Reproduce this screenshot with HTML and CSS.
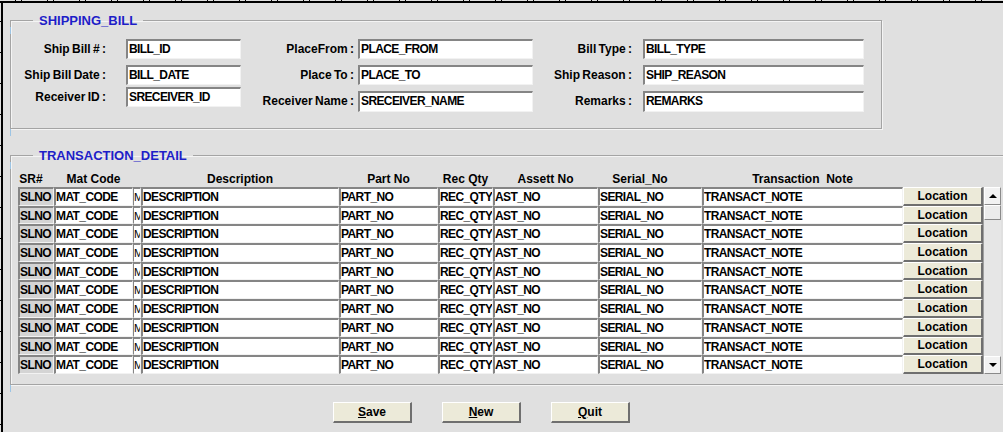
FILE: index.html
```html
<!DOCTYPE html>
<html lang="en">
<head>
    <meta charset="UTF-8">
    <meta name="viewport" content="width=device-width, initial-scale=1.0">
    <title>Shipping Bill</title>
    <link rel="stylesheet" href="styles.css">
</head>
<body>
    <div class="ruler-top"></div>
    <div class="screen">
        <div class="ruler-left"></div>
        <div class="canvas">
            <fieldset class="frame frame-bill">
                <legend>SHIPPING_BILL</legend>
                <div class="bill-grid">
                    <div class="col col-1">
                        <div class="item"><label>Ship Bill # :</label><span class="field">BILL_ID</span></div>
                        <div class="item"><label>Ship Bill Date :</label><span class="field">BILL_DATE</span></div>
                        <div class="item"><label>Receiver ID :</label><span class="field">SRECEIVER_ID</span></div>
                    </div>
                    <div class="col col-2">
                        <div class="item"><label>PlaceFrom :</label><span class="field">PLACE_FROM</span></div>
                        <div class="item"><label>Place To :</label><span class="field">PLACE_TO</span></div>
                        <div class="item"><label>Receiver Name :</label><span class="field">SRECEIVER_NAME</span></div>
                    </div>
                    <div class="col col-3">
                        <div class="item"><label>Bill Type :</label><span class="field">BILL_TYPE</span></div>
                        <div class="item"><label>Ship Reason :</label><span class="field">SHIP_REASON</span></div>
                        <div class="item"><label>Remarks :</label><span class="field">REMARKS</span></div>
                    </div>
                </div>
            </fieldset>

            <fieldset class="frame frame-detail">
                <legend>TRANSACTION_DETAIL</legend>
                <div class="detail">
                    <div class="detail-head">
                        <span class="head-sr">SR#</span>
                        <span>Mat Code</span>
                        <span></span>
                        <span>Description</span>
                        <span>Part No</span>
                        <span>Rec Qty</span>
                        <span>Assett No</span>
                        <span class="head-serial">Serial_No</span>
                        <span>Transaction&nbsp; Note</span>
                    </div>
                    <div class="detail-body">
                        <div class="detail-rows" id="detailRows">
                            <div class="detail-row">
                                <span class="field readonly">SLNO</span>
                                <span class="field">MAT_CODE</span>
                                <span class="field stub">M</span>
                                <span class="field">DESCRIPTION</span>
                                <span class="field">PART_NO</span>
                                <span class="field">REC_QTY</span>
                                <span class="field">AST_NO</span>
                                <span class="field">SERIAL_NO</span>
                                <span class="field">TRANSACT_NOTE</span>
                                <button class="btn">Location</button>
                            </div>
                        </div>
                        <div class="scrollbar">
                            <div class="scroll-btn"><i class="arrow-up"></i></div>
                            <div class="scroll-thumb"></div>
                            <div class="scroll-track"></div>
                            <div class="scroll-btn"><i class="arrow-down"></i></div>
                        </div>
                    </div>
                </div>
            </fieldset>

            <div class="actions">
                <button class="btn btn-action"><u>S</u>ave</button>
                <button class="btn btn-action"><u>N</u>ew</button>
                <button class="btn btn-action"><u>Q</u>uit</button>
            </div>
        </div>
    </div>
    <script>
        // the block shows 10 records, copy the template row
        const rows = document.getElementById('detailRows');
        const template = rows.querySelector('.detail-row');
        for (let i = 1; i < 10; i++) {
            rows.appendChild(template.cloneNode(true));
        }
    </script>
</body>
</html>
```

FILE: styles.css
```css
body {
    margin: 0;
    width: 1003px;
    height: 432px;
    overflow: hidden;
    background-color: #e0e0e0;
    color: #000;
    font-family: 'Liberation Sans', Arial, sans-serif;
    font-size: 12px;
    font-weight: bold;
}
.ruler-top {
    height: 3px;
    background:
        repeating-linear-gradient(90deg, transparent 0 15px, #000 15px 16px, transparent 16px 21px, #000 21px 22px, transparent 22px 32px) 0 0 / 100% 1px no-repeat,
        linear-gradient(#000, #000) 0 1px / 100% 2px no-repeat;
}
.screen {
    display: flex;
    height: 429px;
}
.ruler-left {
    width: 3px;
    flex-shrink: 0;
    background:
        repeating-linear-gradient(180deg, transparent 0 18px, #000 18px 19px, transparent 19px 31px) 0 0 / 1px 100% no-repeat,
        linear-gradient(#000, #000) 1px 0 / 2px 100% no-repeat;
}
.canvas {
    flex: 1;
    padding-left: 7px;
}

/* frames */
.frame {
    position: relative;
    margin: 0;
    padding: 0;
    min-width: 0;
    border: 1px solid #a4a4a4;
    box-shadow: inset 1px 1px 0 #f4f4f4, 1px 1px 0 #f4f4f4;
}
.frame legend {
    margin-left: 22px;
    padding: 0 6px;
    height: 15px;
    line-height: 15px;
    color: #1e1ec8;
    font-size: 13px;
}
.frame::before,
.frame::after {
    content: '';
    position: absolute;
    left: -1px;
    width: 3px;
    height: 7px;
    border-left: 1px solid #9cc4e4;
}
.frame::before {
    top: -1px;
}
.frame::after {
    bottom: -8px;
}
.frame-bill {
    width: 872px;
    box-sizing: border-box;
    margin-top: 10px;
}
.frame-detail {
    width: 1010px;
    box-sizing: border-box;
    margin-top: 19px;
}

/* shipping bill block */
.bill-grid {
    display: flex;
    height: 100px;
    box-sizing: border-box;
    padding-top: 11px;
}
.col {
    display: flex;
    flex-direction: column;
    gap: 6px;
}
.col-1 .item:last-child {
    margin-top: -4px;
}
.item {
    display: flex;
    align-items: center;
    height: 20px;
}
.item label {
    text-align: right;
    word-spacing: -1px;
    white-space: nowrap;
}
.col-1 label { width: 95px; }
.col-1 .field { margin-left: 20px; width: 115px; }
.col-2 label { width: 113px; }
.col-2 .field { margin-left: 4px; width: 175px; }
.col-3 label { width: 99px; }
.col-3 .field { margin-left: 11px; width: 221px; }
.col-2 .item:last-child .field,
.col-3 .item:last-child .field {
    height: 21px;
}

.field {
    display: block;
    box-sizing: border-box;
    height: 20px;
    line-height: 17px;
    padding-left: 1px;
    background-color: #fff;
    border-style: solid;
    border-width: 2px 1px 1px 2px;
    border-color: #858585 #f2f2f2 #f2f2f2 #858585;
    letter-spacing: -0.6px;
    white-space: nowrap;
    overflow: hidden;
}
.field.readonly {
    background-color: #d4d4d4;
    padding-left: 0;
}
.field.stub {
    border-left-width: 1px;
    font-weight: normal;
    font-size: 11px;
    letter-spacing: -1px;
}

/* transaction block */
.detail {
    height: 221px;
    box-sizing: border-box;
    padding: 9px 0 0 7px;
}
.detail-head,
.detail-row {
    display: grid;
    grid-template-columns: 36px 79px 8px 198px 99px 55px 105px 104px 201px 80px;
}
.detail-head {
    height: 15px;
    line-height: 15px;
    text-align: center;
}
.head-sr {
    padding-right: 10px;
}
.head-serial {
    padding-right: 20px;
}
.detail-body {
    display: flex;
}
.detail-row {
    height: 18.7px;
}
.detail-row .field {
    height: auto;
    line-height: 16px;
    padding-left: 0;
}

.btn {
    box-sizing: border-box;
    margin: 0;
    padding: 0;
    background-color: #ecead9;
    border-style: solid;
    border-width: 1px 2px 2px 1px;
    border-color: #fff #6f6f6f #6f6f6f #fff;
    font-family: inherit;
    font-size: 12px;
    font-weight: bold;
    color: #000;
}

.scrollbar {
    display: flex;
    flex-direction: column;
    width: 18px;
    border-left: 1px solid #a0a0a0;
    box-sizing: border-box;
}
.scroll-btn {
    height: 18px;
    display: flex;
    align-items: center;
    justify-content: center;
    box-sizing: border-box;
    background-color: #f2f2f2;
    border-style: solid;
    border-width: 1px;
    border-color: #fff #8a8a8a #8a8a8a #fff;
}
.arrow-up {
    border-left: 4px solid transparent;
    border-right: 4px solid transparent;
    border-bottom: 4px solid #000;
}
.arrow-down {
    border-left: 4px solid transparent;
    border-right: 4px solid transparent;
    border-top: 4px solid #000;
}
.scroll-thumb {
    height: 15px;
    box-sizing: border-box;
    background-color: #ececec;
    border: 1px solid;
    border-color: #fff #8a8a8a #8a8a8a #fff;
}
.scroll-track {
    flex: 1;
    background-color: #e6e6e6;
}

/* bottom buttons */
.actions {
    display: flex;
    gap: 30px;
    margin-top: 17px;
    padding-left: 323px;
}
.btn-action {
    width: 79px;
    height: 21px;
}
```
